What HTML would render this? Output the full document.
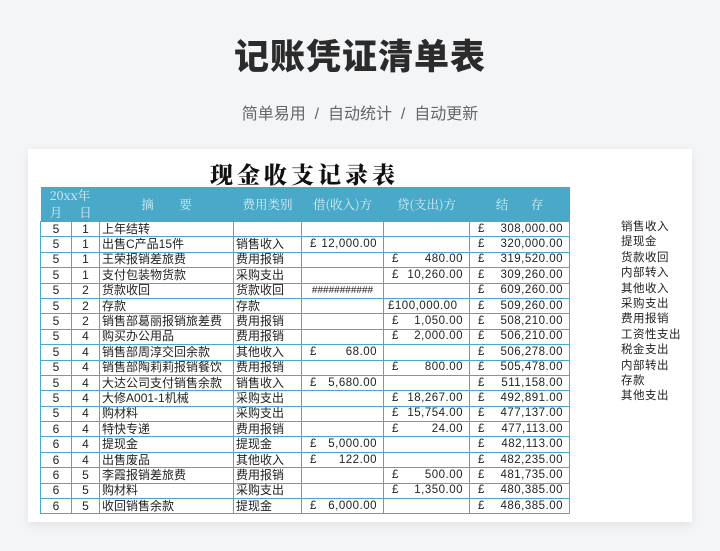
<!DOCTYPE html>
<html><head><meta charset="utf-8"><style>
*{margin:0;padding:0;box-sizing:border-box}
body{width:720px;height:551px;background:#f4f5f7;font-family:"Liberation Sans","Noto Sans CJK SC",sans-serif;position:relative;overflow:hidden}
h1{position:absolute;top:29px;left:0;width:720px;text-align:center;font-size:35px;font-weight:900;color:#2b2b2b;letter-spacing:1px}
.sub{position:absolute;top:100px;left:0;width:720px;text-align:center;font-size:16px;color:#666}
.card{position:absolute;left:28px;top:149px;width:664px;height:373px;background:#fff;box-shadow:0 3px 10px rgba(0,0,0,.08);overflow:hidden}
.t2{position:absolute;left:40px;top:157px;width:529px;text-align:center;font-family:"Noto Serif CJK SC",serif;font-weight:900;font-size:23px;letter-spacing:4px;color:#111}
table{position:absolute;left:40px;top:187px;width:529px;border-collapse:collapse;table-layout:fixed;font-size:12px;color:#222}
td{border:1px solid #4aa9c8;height:15.4px;line-height:13px;padding:0 2px;white-space:nowrap;overflow:hidden}
th{background:#4aa9c8;color:#d8eef6;font-weight:normal;font-family:"Noto Serif CJK SC",serif;font-size:12.5px;border:none}
.c{text-align:center}
.m{display:flex;justify-content:space-between;padding:0 4px 0 6px;font-family:"Liberation Sans","Noto Sans CJK SC",sans-serif;font-size:11.5px;letter-spacing:.5px}
.side{position:absolute;left:621px;top:220px;font-size:11.5px;letter-spacing:.5px;line-height:15.4px;color:#222}
</style></head><body>
<h1>记账凭证清单表</h1>
<div class="sub">简单易用 &nbsp;/&nbsp; 自动统计 &nbsp;/&nbsp; 自动更新</div>
<div class="card"></div>
<div class="t2">现金收支记录表</div>
<table>
<colgroup><col style="width:31px"><col style="width:28px"><col style="width:134px"><col style="width:68px"><col style="width:82px"><col style="width:86px"><col style="width:100px"></colgroup>
<tr style="height:16px"><th colspan="2" style="height:16px;line-height:16px">20xx年</th><th rowspan="2">摘&nbsp;&nbsp;&nbsp;&nbsp;&nbsp;&nbsp;&nbsp;&nbsp;要</th><th rowspan="2">费用类别</th><th rowspan="2">借(收入)方</th><th rowspan="2">贷(支出)方</th><th rowspan="2">结&nbsp;&nbsp;&nbsp;&nbsp;&nbsp;&nbsp;&nbsp;存</th></tr>
<tr style="height:16px"><th style="height:16px;line-height:16px">月</th><th>日</th></tr>
<tr><td class="c">5</td><td class="c">1</td><td>上年结转</td><td></td><td></td><td></td><td><div class="m"><span>£</span><span>308,000.00</span></div></td></tr>
<tr><td class="c">5</td><td class="c">1</td><td>出售C产品15件</td><td>销售收入</td><td><div class="m"><span>£</span><span>12,000.00</span></div></td><td></td><td><div class="m"><span>£</span><span>320,000.00</span></div></td></tr>
<tr><td class="c">5</td><td class="c">1</td><td>王荣报销差旅费</td><td>费用报销</td><td></td><td><div class="m"><span>£</span><span>480.00</span></div></td><td><div class="m"><span>£</span><span>319,520.00</span></div></td></tr>
<tr><td class="c">5</td><td class="c">1</td><td>支付包装物货款</td><td>采购支出</td><td></td><td><div class="m"><span>£</span><span>10,260.00</span></div></td><td><div class="m"><span>£</span><span>309,260.00</span></div></td></tr>
<tr><td class="c">5</td><td class="c">2</td><td>货款收回</td><td>货款收回</td><td class="c" style="font-size:10px">###########</td><td></td><td><div class="m"><span>£</span><span>609,260.00</span></div></td></tr>
<tr><td class="c">5</td><td class="c">2</td><td>存款</td><td>存款</td><td></td><td><div class="m" style="padding-left:2px"><span>£100,000.00</span></div></td><td><div class="m"><span>£</span><span>509,260.00</span></div></td></tr>
<tr><td class="c">5</td><td class="c">2</td><td>销售部葛丽报销旅差费</td><td>费用报销</td><td></td><td><div class="m"><span>£</span><span>1,050.00</span></div></td><td><div class="m"><span>£</span><span>508,210.00</span></div></td></tr>
<tr><td class="c">5</td><td class="c">4</td><td>购买办公用品</td><td>费用报销</td><td></td><td><div class="m"><span>£</span><span>2,000.00</span></div></td><td><div class="m"><span>£</span><span>506,210.00</span></div></td></tr>
<tr><td class="c">5</td><td class="c">4</td><td>销售部周淳交回余款</td><td>其他收入</td><td><div class="m"><span>£</span><span>68.00</span></div></td><td></td><td><div class="m"><span>£</span><span>506,278.00</span></div></td></tr>
<tr><td class="c">5</td><td class="c">4</td><td>销售部陶莉莉报销餐饮</td><td>费用报销</td><td></td><td><div class="m"><span>£</span><span>800.00</span></div></td><td><div class="m"><span>£</span><span>505,478.00</span></div></td></tr>
<tr><td class="c">5</td><td class="c">4</td><td>大达公司支付销售余款</td><td>销售收入</td><td><div class="m"><span>£</span><span>5,680.00</span></div></td><td></td><td><div class="m"><span>£</span><span>511,158.00</span></div></td></tr>
<tr><td class="c">5</td><td class="c">4</td><td>大修A001-1机械</td><td>采购支出</td><td></td><td><div class="m"><span>£</span><span>18,267.00</span></div></td><td><div class="m"><span>£</span><span>492,891.00</span></div></td></tr>
<tr><td class="c">5</td><td class="c">4</td><td>购材料</td><td>采购支出</td><td></td><td><div class="m"><span>£</span><span>15,754.00</span></div></td><td><div class="m"><span>£</span><span>477,137.00</span></div></td></tr>
<tr><td class="c">6</td><td class="c">4</td><td>特快专递</td><td>费用报销</td><td></td><td><div class="m"><span>£</span><span>24.00</span></div></td><td><div class="m"><span>£</span><span>477,113.00</span></div></td></tr>
<tr><td class="c">6</td><td class="c">4</td><td>提现金</td><td>提现金</td><td><div class="m"><span>£</span><span>5,000.00</span></div></td><td></td><td><div class="m"><span>£</span><span>482,113.00</span></div></td></tr>
<tr><td class="c">6</td><td class="c">4</td><td>出售废品</td><td>其他收入</td><td><div class="m"><span>£</span><span>122.00</span></div></td><td></td><td><div class="m"><span>£</span><span>482,235.00</span></div></td></tr>
<tr><td class="c">6</td><td class="c">5</td><td>李霞报销差旅费</td><td>费用报销</td><td></td><td><div class="m"><span>£</span><span>500.00</span></div></td><td><div class="m"><span>£</span><span>481,735.00</span></div></td></tr>
<tr><td class="c">6</td><td class="c">5</td><td>购材料</td><td>采购支出</td><td></td><td><div class="m"><span>£</span><span>1,350.00</span></div></td><td><div class="m"><span>£</span><span>480,385.00</span></div></td></tr>
<tr><td class="c">6</td><td class="c">5</td><td>收回销售余款</td><td>提现金</td><td><div class="m"><span>£</span><span>6,000.00</span></div></td><td></td><td><div class="m"><span>£</span><span>486,385.00</span></div></td></tr>
</table>
<div class="side">销售收入<br>提现金<br>货款收回<br>内部转入<br>其他收入<br>采购支出<br>费用报销<br>工资性支出<br>税金支出<br>内部转出<br>存款<br>其他支出</div>
</body></html>
